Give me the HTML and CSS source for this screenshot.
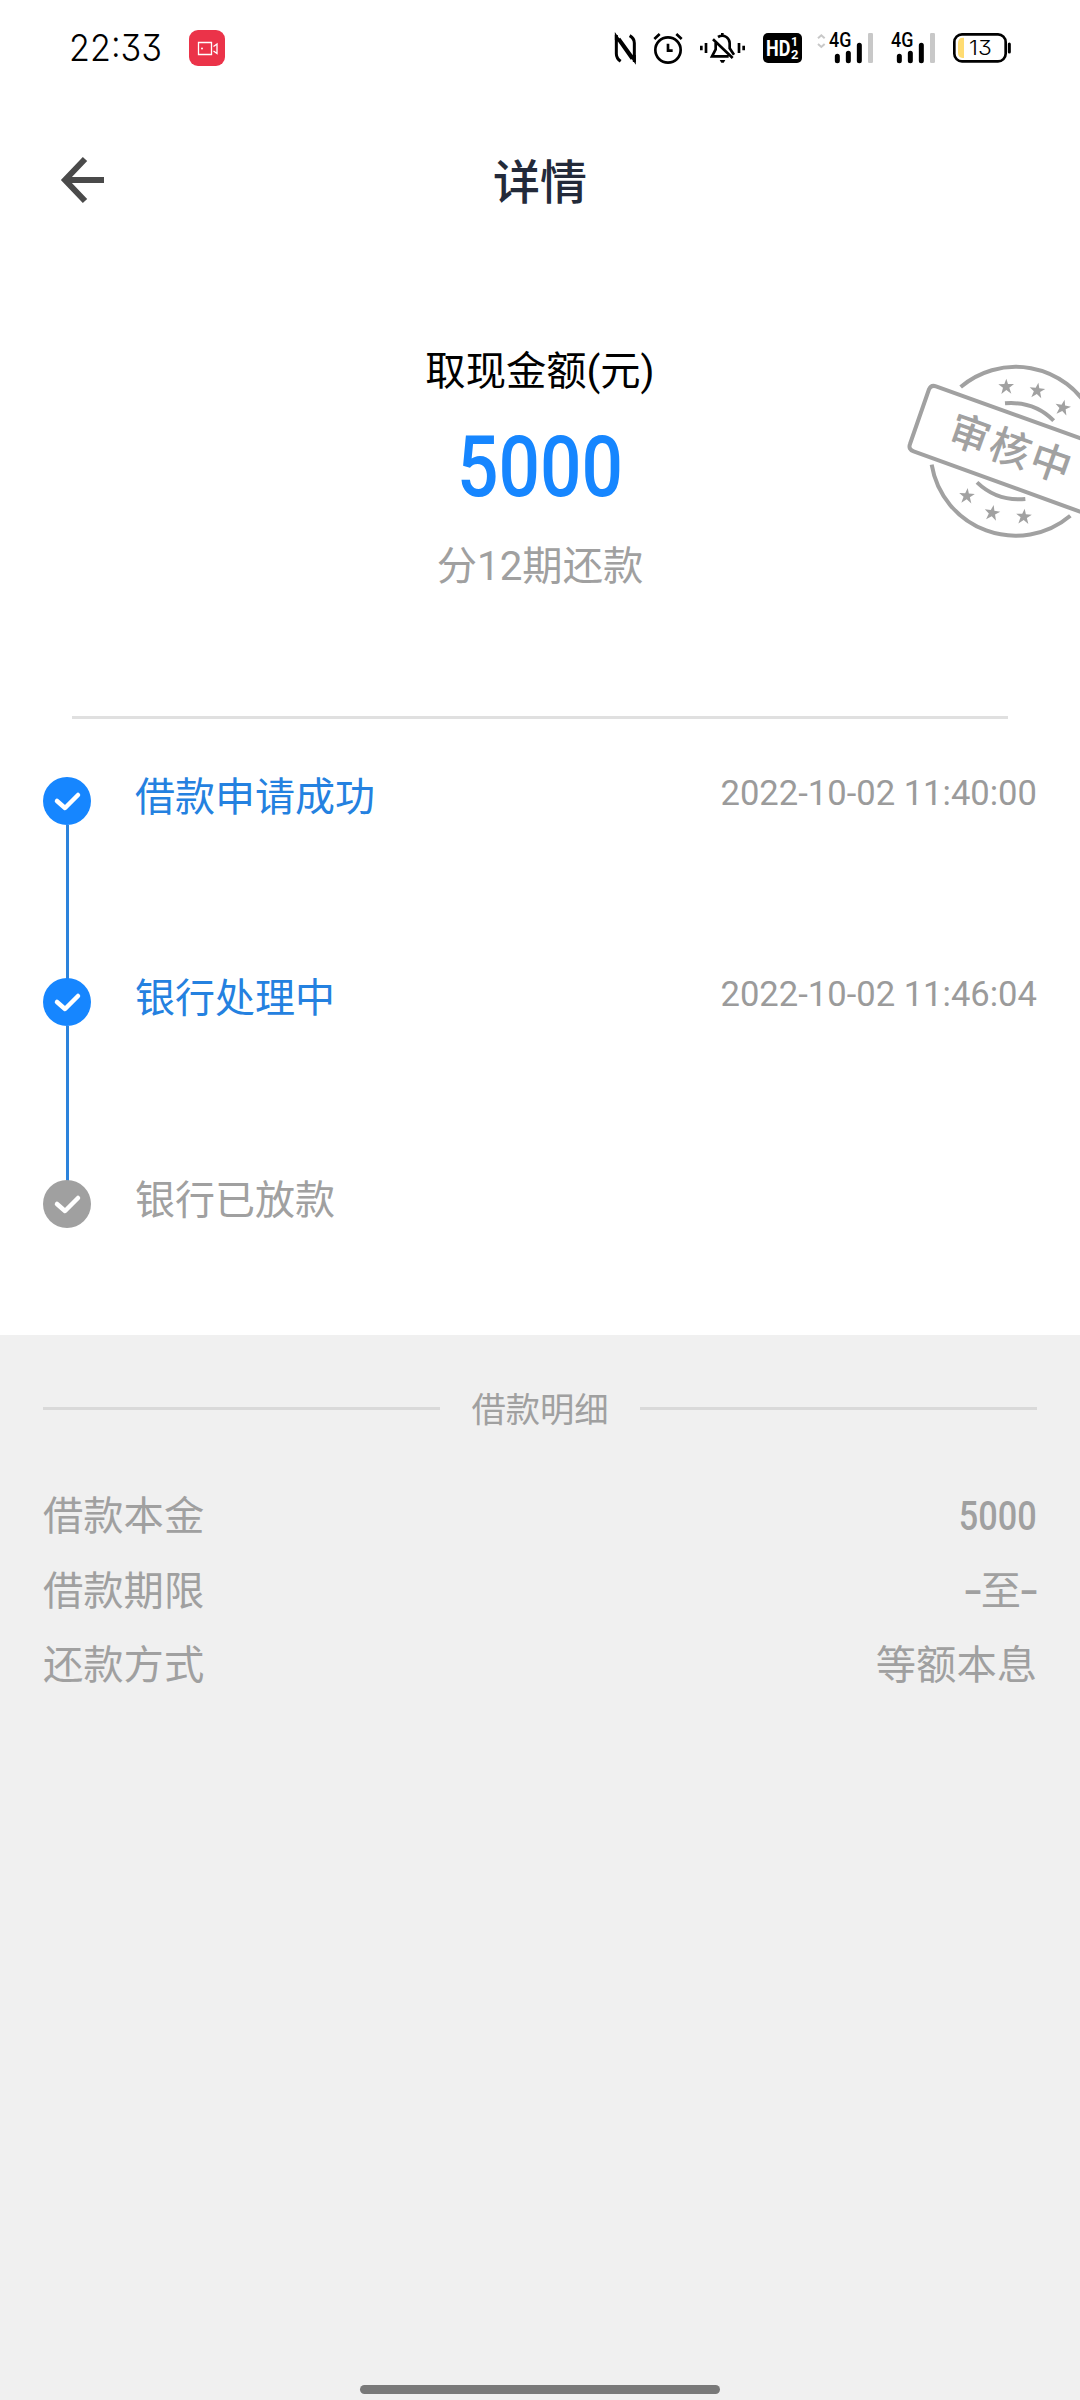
FILE: index.html
```html
<!DOCTYPE html>
<html lang="zh-CN">
<head>
<meta charset="utf-8">
<title>详情</title>
<link rel="stylesheet" href="styles.css">
</head>
<body>
<div class="page">
  <header class="status">
    <svg class="clock" viewBox="0 0 100 50"><text x="4" y="37" textLength="93" lengthAdjust="spacingAndGlyphs">22:33</text></svg>
    <svg class="rec" viewBox="0 0 36 36">
      <rect width="36" height="36" rx="9" fill="#eb3349"/>
      <g fill="none" stroke="#fff" stroke-width="1.3">
        <path d="M9.5 12.5h13v12h-13z"/><path d="M24.500 16.500l3.500-2.500v9.500l-3.500-2.500"/>
      </g>
      <circle cx="13" cy="18.500" r="1" fill="#fff"/>
    </svg>
    <div class="icons">
      <svg width="36" height="70" viewBox="30 0 108 210" fill="none" stroke="#000" stroke-width="9">
        <path d="M62 139Q49 130 49 116V65L96 132M89 62Q103 70 103 84V135L57 71"/>
        <path d="M49 60V75M103 120V141"/>
      </svg>
      <svg width="44" height="70" viewBox="138 0 132 210" fill="none" stroke="#000" stroke-width="8">
        <circle cx="204" cy="105" r="38"/><path d="M204 86v21h14M163 72l16-15M245 72l-16-15"/>
      </svg>
      <svg width="65" height="70" viewBox="270 0 195 210" fill="none" stroke="#000" stroke-width="8">
        <path d="M304 92v14M318 84v30M417 84v30M431 92v14"/>
        <path d="M347 83V103L336 124H386M354 66Q367 58 379 66Q389 73 389 84V100L402 119M367 54v8M339 73l59 56"/>
        <path d="M359 135h17l-5 8h-7z" fill="#000" stroke="none"/>
      </svg>
      <svg width="55" height="70" viewBox="465 0 165 210">
        <rect x="489" y="54" width="117" height="90" rx="15"/>
        <g class="hd"><text x="498" y="123" font-size="66" textLength="73" lengthAdjust="spacingAndGlyphs">HD</text>
        <text x="573" y="94" font-size="37">1</text><text x="573" y="131" font-size="39">2</text></g>
      </svg>
      <svg width="70" height="70" viewBox="30 0 210 210">
        <path d="M54 70l10-9 10 9M54 87l10 9 10-9" fill="none" stroke="#c8c8c8" stroke-width="6"/>
        <text class="net" x="87" y="97" textLength="67" lengthAdjust="spacingAndGlyphs">4G</text>
        <path d="M112 124v13M145 115v22M178 91v46" stroke="#000" stroke-width="15" stroke-linecap="round"/>
        <rect x="204" y="54" width="15" height="90" rx="4" fill="#c8c8c8"/>
      </svg>
      <svg width="67" height="70" viewBox="240 0 201 210">
        <text class="net" x="273" y="97" textLength="67" lengthAdjust="spacingAndGlyphs">4G</text>
        <path d="M298 124v13M331 115v22M364 91v46" stroke="#000" stroke-width="15" stroke-linecap="round"/>
        <rect x="390" y="54" width="15" height="90" rx="4" fill="#c8c8c8"/>
      </svg>
      <svg width="67" height="70" viewBox="441 0 201 210">
        <rect x="463" y="58" width="154" height="81" rx="23" fill="none" stroke="#000" stroke-width="8"/>
        <path d="M628 87v24" stroke="#000" stroke-width="9" stroke-linecap="round"/>
        <path d="M492 68V129H488Q474 129 474 112V85Q474 68 488 68Z" fill="#ffdc72"/>
        <text class="pct" x="507" y="120" textLength="68" lengthAdjust="spacingAndGlyphs">13</text>
      </svg>
    </div>
  </header>

  <nav class="nav">
    <svg class="back" viewBox="0 0 44 48" fill="none" stroke="#4a4a4a" stroke-width="6"><path d="M44 24H6M25 3L5 24L25 45"/></svg>
    <h1 class="title">详情</h1>
    <span class="side"></span>
  </nav>

  <section class="summary">
    <p class="label">取现金额(元)</p>
    <p class="amount">5000</p>
    <p class="terms">分12期还款</p>
    <svg class="stamp" viewBox="0 0 570 660" fill="none" stroke="#a1a1a1" stroke-width="12">
      <path d="M212 141A255 255 0 0 1 600 212M125 374A255 255 0 0 0 541 527"/>
      <path d="M600 305L138 139Q123 134 117 148L60 312Q54 328 71 334L600 526"/>
      <path d="M345 190Q433 183 491 242M261 427Q322 485 406 477"/>
      <g fill="#a1a1a1" stroke="none">
        <path id="star" d="M349 116l5 16 18 0-14 11 6 18-15-11-15 12 5-19-14-10 18-1z"/>
        <use href="#star" transform="translate(93 12) rotate(8 349 139)"/>
        <use href="#star" transform="translate(170 63) rotate(12 349 139)"/>
        <use href="#star" transform="translate(-118 328) rotate(5 349 139)"/>
        <use href="#star" transform="translate(-42 379) rotate(10 349 139)"/>
        <use href="#star" transform="translate(53 390) rotate(5 349 139)"/>
        <g class="seal" transform="translate(240 281) rotate(19.600)">
          <text x="0" y="45">审</text><text x="129" y="45">核</text><text x="258" y="45">中</text>
        </g>
      </g>
    </svg>
  </section>

  <ol class="steps">
    <li class="step done">
      <svg class="mark" viewBox="0 0 48 48"><circle cx="24" cy="24" r="24"/><path d="M14 24L22 31L35 18"/></svg>
      <span class="name">借款申请成功</span><time class="time">2022-10-02 11:40:00</time>
    </li>
    <li class="step done">
      <svg class="mark" viewBox="0 0 48 48"><circle cx="24" cy="24" r="24"/><path d="M14 24L22 31L35 18"/></svg>
      <span class="name">银行处理中</span><time class="time">2022-10-02 11:46:04</time>
    </li>
    <li class="step">
      <svg class="mark" viewBox="0 0 48 48"><circle cx="24" cy="24" r="24"/><path d="M14 24L22 31L35 18"/></svg>
      <span class="name">银行已放款</span>
    </li>
  </ol>

  <section class="detail">
    <h2 class="heading"><span>借款明细</span></h2>
    <dl class="rows">
      <div class="row"><dt>借款本金</dt><dd><span class="num">5000</span></dd></div>
      <div class="row"><dt>借款期限</dt><dd><b class="dash">-</b>至<b class="dash">-</b></dd></div>
      <div class="row"><dt>还款方式</dt><dd>等额本息</dd></div>
    </dl>
    <div class="home"></div>
  </section>
</div>
</body>
</html>
```
FILE: styles.css
```css
* { box-sizing: border-box; margin: 0; padding: 0; }
body { background: #fff; }
.page {
  width: 1080px; height: 2400px; overflow: hidden;
  display: flex; flex-direction: column;
  font-family: Roboto, "Noto Sans CJK SC", sans-serif;
  font-size: 40.300px; line-height: 60px; color: #a0a0a0;
}
svg { display: block; flex: none; }

.status { display: flex; height: 96px; padding-left: 65px; }
.clock { width: 100px; height: 50px; margin-top: 24px; }
.clock text { font: 350 37px Inter, sans-serif; font-feature-settings: "cv09"; }
.rec { width: 36px; height: 36px; margin: 30px 0 0 24px; }
.icons { display: flex; margin: 15px 66px 0 auto; }
.hd { font-family: Roboto, sans-serif; font-weight: 700; fill: #fff; }
.net { font: 500 60px Roboto, sans-serif; }
.pct { font: 300 62px Inter, sans-serif; font-feature-settings: "cv09"; }

.nav { display: flex; justify-content: space-between; align-items: center; height: 168px; padding: 0 60px; }
.back, .side { width: 44px; height: 48px; }
.title { font-size: 47px; font-weight: 500; color: #232a3a; line-height: 60px; padding-top: 6px; }

.summary {
  position: relative; height: 455px; margin: 0 72px; padding-top: 78px;
  border-bottom: 3px solid #e0e0e0; text-align: center;
}
.label { color: #000; }
.amount { font-size: 86px; font-weight: 500; line-height: 100px; color: #1686ff; margin: 15px 0 20px; transform: scaleX(.850); }
.stamp { position: absolute; left: 818px; top: 76px; width: 190px; height: 220px; }
.seal { font-size: 122px; font-weight: 500; text-anchor: middle; }

.steps { list-style: none; height: 616px; padding: 58px 43px 0; }
.step { display: flex; height: 202px; position: relative; }
.step:first-child { height: 201px; }
.step.done::after {
  content: ""; position: absolute; left: 23px; top: 48px; width: 3px; height: 156px; background: #2c83dc;
}
.mark { width: 48px; height: 48px; fill: #a0a0a0; }
.mark path { fill: none; stroke: #fff; stroke-width: 4.500; stroke-linecap: round; stroke-linejoin: round; }
.done .mark { fill: #1686ff; }
.name { margin: -9px 0 0 44px; font-size: 40px; }
.done .name { color: #2481e0; }
.time { margin: -14px 0 0 auto; font-size: 34.600px; color: #9b9b9b; }

.detail { flex: 1; background: #f0f0f0; padding: 43px 43px 6px; display: flex; flex-direction: column; }
.heading { display: flex; align-items: center; gap: 31px; height: 60px; font-size: 34.300px; font-weight: 400; }
.heading span { padding-top: 4px; }
.heading::before, .heading::after { content: ""; flex: 1; height: 3px; background: #d9d9d9; }
.rows { padding-top: 42px; }
.row { display: flex; justify-content: space-between; height: 74.500px; line-height: 74.500px; }
.num { display: inline-block; font-weight: 500; transform: scaleX(.850); transform-origin: right; }
.dash { display: inline-block; width: 16px; text-align: center; font-weight: 500; transform: scaleX(1.400); }
.home { width: 360px; height: 9px; border-radius: 5px; background: #797979; margin: auto auto 0; }
```
